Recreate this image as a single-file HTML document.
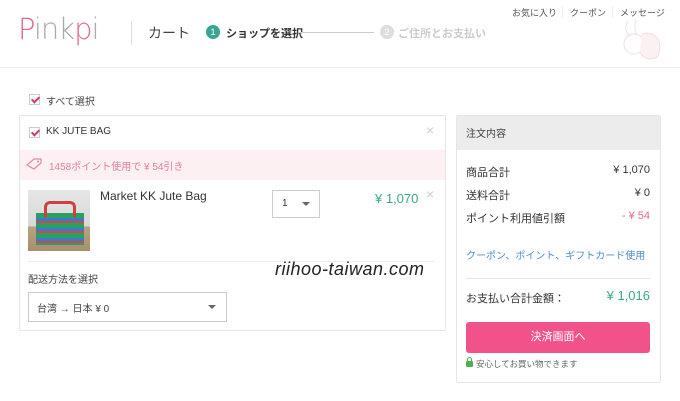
<!DOCTYPE html>
<html><head><meta charset="utf-8"><style>
*{box-sizing:border-box;margin:0;padding:0}
body{width:680px;height:401px;background:#fff;font-family:"Liberation Sans","Noto Sans CJK JP",sans-serif;color:#333;position:relative;overflow:hidden;font-size:11px}
.a{position:absolute;white-space:nowrap}
.cb{position:absolute;width:11px;height:11px;border:1px solid #ccc;background:#fff}
.cb:after{content:"";position:absolute;left:3px;top:0px;width:3px;height:6px;border:solid #d63a6a;border-width:0 2px 2px 0;transform:rotate(45deg)}
.tri{position:absolute;width:0;height:0;border-left:5px solid transparent;border-right:5px solid transparent;border-top:5px solid #666}
</style></head><body>
<div class="a" style="left:0;top:67px;width:680px;height:1px;background:#eee"></div>
<div class="a" style="left:18px;top:12px;font-size:29px;font-family:'DejaVu Sans',sans-serif;font-weight:300;color:#aaa;letter-spacing:-1px"><span style="color:#e06a8a">P</span>ink<span style="color:#e06a8a">p</span>i</div>
<div class="a" style="left:131px;top:22px;width:1px;height:23px;background:#ddd"></div>
<div class="a" style="left:148px;top:23px;font-size:14px;color:#444">カート</div>
<div class="a" style="left:206px;top:25px;width:14px;height:14px;border-radius:50%;background:#3aa68f;color:#fff;font-size:9px;text-align:center;line-height:14px">1</div>
<div class="a" style="left:226px;top:25px;font-size:11px;font-weight:bold;color:#333">ショップを選択</div>
<div class="a" style="left:298px;top:32px;width:76px;height:1px;background:#ccc"></div>
<div class="a" style="left:380px;top:25px;width:14px;height:14px;border-radius:50%;background:#ddd;color:#fff;font-size:9px;text-align:center;line-height:14px">2</div>
<div class="a" style="left:398px;top:25px;font-size:11px;font-weight:bold;color:#ccc">ご住所とお支払い</div>
<div class="a" style="left:512px;top:6px;font-size:9px;color:#555">お気に入り</div>
<div class="a" style="left:562px;top:6px;width:1px;height:12px;background:#eee"></div>
<div class="a" style="left:570px;top:6px;font-size:9px;color:#555">クーポン</div>
<div class="a" style="left:612px;top:6px;width:1px;height:12px;background:#eee"></div>
<div class="a" style="left:620px;top:6px;font-size:9px;color:#555">メッセージ</div>
<svg class="a" style="left:618px;top:18px" width="52" height="45" viewBox="0 0 52 45"><g fill="none" stroke="#eee0e3" stroke-width="1"><path d="M10 3 C6 8 8 16 12 18 M18 2 C16 8 17 14 19 17"/><ellipse cx="16" cy="26" rx="10" ry="10"/><path d="M24 16 C36 12 46 22 40 38 C34 44 24 40 22 34" fill="#fbf0f2"/></g></svg>

<div class="cb" style="left:29px;top:94px"></div>
<div class="a" style="left:46px;top:93px;font-size:10px;color:#444">すべて選択</div>

<div class="a" style="left:19px;top:115px;width:427px;height:216px;border:1px solid #e6e6e6;border-radius:2px"></div>
<div class="cb" style="left:29px;top:127px"></div>
<div class="a" style="left:46px;top:126px;font-size:10px;color:#333">KK JUTE BAG</div>
<div class="a" style="left:426px;top:122px;font-size:14px;color:#ccc">×</div>
<div class="a" style="left:20px;top:150px;width:425px;height:30px;background:#fdf0f3"></div>
<svg class="a" style="left:25px;top:157px" width="18" height="14" viewBox="0 0 18 14"><path d="M2 8 L9 2 L16 2 L16 6 L9 12 Z" fill="none" stroke="#e48aa5" stroke-width="1.2"/><circle cx="13" cy="4.5" r="1" fill="#e48aa5"/></svg>
<div class="a" style="left:49px;top:158px;font-size:10px;color:#e0809d">1458ポイント使用で ¥ 54引き</div>
<div class="a" style="left:28px;top:190px;width:62px;height:61px;background:linear-gradient(#e6e6e6 0,#d8d8d8 60%,#b8a282 60%,#a88f6e 100%)"></div>
<div class="a" style="left:36px;top:213px;width:48px;height:32px;background:repeating-linear-gradient(#2aa060 0 5px,#3a7acc 5px 8px,#d24848 8px 10px)"></div>
<div class="a" style="left:44px;top:201px;width:32px;height:16px;border:3px solid #d04040;border-bottom:none;border-radius:6px 6px 0 0"></div>
<div class="a" style="left:100px;top:189px;font-size:12px;color:#333">Market KK Jute Bag</div>
<div class="a" style="left:272px;top:190px;width:48px;height:28px;border:1px solid #ccc;background:#fff"></div>
<div class="a" style="left:282px;top:198px;font-size:10px">1</div>
<div class="tri" style="left:302px;top:202px;border-top-width:4px;border-left-width:4px;border-right-width:4px"></div>
<div class="a" style="left:375px;top:191px;font-size:13px;color:#3aa68f">¥ 1,070</div>
<div class="a" style="left:426px;top:186px;font-size:14px;color:#ccc">×</div>
<div class="a" style="left:28px;top:261px;width:407px;height:1px;background:#eee"></div>
<div class="a" style="left:28px;top:271px;font-size:10px;color:#444">配送方法を選択</div>
<div class="a" style="left:275px;top:259px;font-size:18px;font-style:italic;color:#222;letter-spacing:0.5px">riihoo-taiwan.com</div>
<div class="a" style="left:28px;top:292px;width:199px;height:30px;border:1px solid #ccc;background:#fff"></div>
<div class="a" style="left:37px;top:300px;font-size:10px;color:#444">台湾 → 日本 ¥ 0</div>
<div class="tri" style="left:208px;top:305px;border-top-width:4px;border-left-width:4px;border-right-width:4px"></div>

<div class="a" style="left:456px;top:115px;width:205px;height:268px;border:1px solid #e6e6e6;border-radius:2px"></div>
<div class="a" style="left:457px;top:116px;width:203px;height:34px;background:#ececec"></div>
<div class="a" style="left:466px;top:125px;font-size:10px;color:#444">注文内容</div>
<div class="a" style="left:466px;top:164px;font-size:11px">商品合計</div>
<div class="a" style="left:590px;top:164px;width:60px;text-align:right;font-size:11px">¥ 1,070</div>
<div class="a" style="left:466px;top:187px;font-size:11px">送料合計</div>
<div class="a" style="left:590px;top:187px;width:60px;text-align:right;font-size:11px">¥ 0</div>
<div class="a" style="left:466px;top:210px;font-size:11px">ポイント利用値引額</div>
<div class="a" style="left:590px;top:210px;width:60px;text-align:right;font-size:11px;color:#e06a8a">- ¥ 54</div>
<div class="a" style="left:466px;top:247px;font-size:10px;color:#4a90c8">クーポン、ポイント、ギフトカード使用</div>
<div class="a" style="left:466px;top:278px;width:184px;height:1px;background:#e6e6e6"></div>
<div class="a" style="left:466px;top:290px;font-size:11px">お支払い合計金額：</div>
<div class="a" style="left:590px;top:288px;width:60px;text-align:right;font-size:13px;color:#3aa68f">¥ 1,016</div>
<div class="a" style="left:466px;top:322px;width:184px;height:31px;background:#f2528a;border-radius:3px;color:#fff;font-size:11px;text-align:center;line-height:31px">決済画面へ</div>
<div class="a" style="left:466px;top:361px;width:7px;height:6px;background:#4caf50;border-radius:1px"></div>
<div class="a" style="left:467px;top:357px;width:5px;height:6px;border:1px solid #4caf50;border-radius:3px 3px 0 0"></div>
<div class="a" style="left:476px;top:358px;font-size:8.5px;color:#666">安心してお買い物できます</div>
</body></html>
